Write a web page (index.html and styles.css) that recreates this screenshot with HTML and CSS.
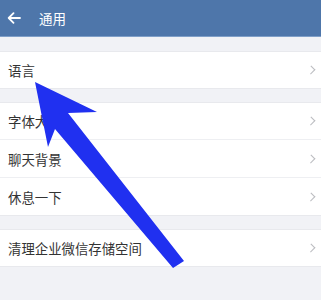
FILE: index.html
```html
<!DOCTYPE html>
<html>
<head>
<meta charset="utf-8">
<link rel="stylesheet" href="styles.css">
</head>
<body>
<div class="page">
  <div class="header">
    <svg class="back" width="14" height="12" viewBox="0 0 14 12"><path d="M13 6H2M6.5 1.2L1.7 6l4.8 4.8" fill="none" stroke="#fff" stroke-width="1.8" stroke-linecap="round" stroke-linejoin="round"/></svg>
    <span class="title">通用</span>
  </div>
  <div class="group first">
    <div class="row"><span>语言</span><i class="chev"></i></div>
  </div>
  <div class="group">
    <div class="row"><span>字体大小</span><i class="chev"></i></div>
    <div class="row"><span>聊天背景</span><i class="chev"></i></div>
    <div class="row"><span>休息一下</span><i class="chev"></i></div>
  </div>
  <div class="group">
    <div class="row"><span>清理企业微信存储空间</span><i class="chev"></i></div>
  </div>
  <svg class="arrow" width="321" height="300" viewBox="0 0 321 300"><polygon points="35,82 97,112 68,113 184,261 173,268 55,129 48,147" fill="#2030f0"/></svg>
</div>
</body>
</html>
```

FILE: styles.css
```css
html, body { margin: 0; padding: 0; }
body { background: #f1f2f6; font-family: "Noto Sans CJK SC", "Noto Sans", sans-serif; }
.page { position: relative; width: 321px; height: 300px; overflow: hidden; background: #f1f2f6; }
.header { height: 37px; background: #4e76aa; display: flex; align-items: center; border-bottom: 1px solid #7f9fc8; box-sizing: border-box; }
.back { margin-left: 7px; }
.title { margin-left: 18px; color: #fff; font-size: 13.5px; }
.group { margin-top: 13px; background: #fff; border-top: 1px solid #e8e9ed; border-bottom: 1px solid #e8e9ed; }
.group.first { margin-top: 14px; }
.row { height: 36px; display: flex; align-items: center; justify-content: space-between; padding: 0 7px 0 8px; color: #333; font-size: 13.4px; box-sizing: border-box; }
.row + .row { border-top: 1px solid #eeeff2; height: 38px; }
.chev { width: 5px; height: 5px; border-right: 1.2px solid #bbbcc0; border-top: 1.2px solid #bbbcc0; transform: rotate(45deg) scaleY(1.1); }
.arrow { position: absolute; left: 0; top: 0; }
```
